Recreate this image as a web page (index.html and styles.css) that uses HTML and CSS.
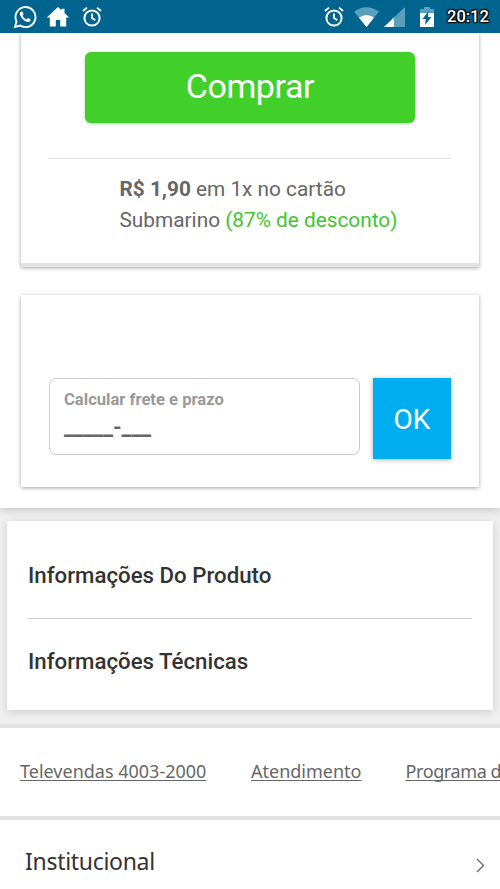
FILE: index.html
```html
<!DOCTYPE html>
<html lang="pt-BR">
<head>
<meta charset="utf-8">
<title>Submarino</title>
<link rel="stylesheet" href="styles.css">
</head>
<body>
<header class="status">
  <svg class="whatsapp" width="24" height="24" viewBox="0 0 24 24"><path d="M2 22l1.500-5.600A10 10 0 1 1 7.300 20.600z" fill="none" stroke="#fff" stroke-width="1.900"/><path d="M8.200 6.500c-2 .8-1.900 3 0 5.700 2.200 3 4.600 4.700 6.900 4.800 1.600 0 2.800-1.100 2.500-2.500l-2.600-1.400c-.8.300-1 1.500-1.700 1.300-1.700-.8-2.800-2-3.700-3.600 0-.7 1.100-1.100.9-1.900L9.600 6.700z" fill="#fff"/></svg>
  <svg class="home" width="24" height="24" viewBox="0 0 24 24"><path d="M12 2L.8 12.600h3V21.500h6v-6.500h4.400v6.500h6v-8.900h3L18.500 8.100V3.800h-3v1.500z" fill="#fff"/></svg>
  <svg class="alarm" width="20" height="22" viewBox="0 0 20 22"><g fill="none" stroke="#fff" stroke-width="2"><circle cx="10" cy="12" r="7.600"/><path d="M1 5l4-3.400M19 5l-4-3.400M10 7.500V12l3.300 2.300" stroke-width="1.800"/></g></svg>
  <span class="fill"></span>
  <svg class="alarm" width="20" height="22" viewBox="0 0 20 22"><g fill="none" stroke="#fff" stroke-width="2"><circle cx="10" cy="12" r="7.600"/><path d="M1 5l4-3.400M19 5l-4-3.400M10 7.500V12l3.300 2.300" stroke-width="1.800"/></g></svg>
  <svg class="wifi" width="25" height="20" viewBox="0 0 25 20"><path d="M12.500 20L0 4.500Q12.500-4 25 4.500z" fill="#5b9fbc"/><path d="M12.500 20L5 10.700Q12.500 5.500 20 10.700z" fill="#fff"/></svg>
  <svg class="signal" width="21" height="20" viewBox="0 0 21 20"><path d="M21 0v20H0z" fill="#5b9fbc"/><path d="M10 10.500V20H0z" fill="#fff"/></svg>
  <svg class="battery" width="14" height="20" viewBox="0 0 14 20"><path d="M0 2h4V0h6v2h4v5H0z" fill="#5b9fbc"/><path d="M0 6h14v14H0z" fill="#fff"/><path d="M8.500 4L2.500 12h3.300L5 18l6.500-8H8z" fill="#00648e"/></svg>
  <time class="clock">20:12</time>
</header>
<main class="product">
  <section class="card buy">
    <button class="buy-btn">Comprar</button>
    <hr class="rule">
    <p class="offer"><b>R$ 1,90</b> em 1x no cartão<br>Submarino <span class="off">(87% de desconto)</span></p>
  </section>
  <section class="card freight">
    <label class="zip"><span class="zip-label">Calcular frete e prazo</span><span class="zip-mask">_____-___</span></label>
    <button class="ok-btn">OK</button>
  </section>
</main>
<section class="info">
  <h2 class="info-row">Informações Do Produto</h2>
  <h2 class="info-row">Informações Técnicas</h2>
</section>
<nav class="links">
  <a class="l1">Televendas 4003-2000</a><a class="l2">Atendimento</a><a class="l3">Programa de</a>
</nav>
<footer class="inst">
  <span class="inst-name">Institucional</span>
  <svg class="chev" width="9" height="15" viewBox="0 0 9 15"><path d="M1 1l6.500 6.500L1 14" fill="none" stroke="#666" stroke-width="1.300"/></svg>
</footer>
</body>
</html>
```
FILE: styles.css
```css
* { box-sizing: border-box; }
body { margin: 0; width: 500px; height: 889px; overflow: hidden; background: #efefef; font-family: Roboto, "Liberation Sans", sans-serif; color: #666; display: flex; flex-direction: column; }
button { border: 0; padding: 0; font-family: inherit; color: #fff; }
.status { height: 33px; flex: none; background: #00648e; display: flex; align-items: center; padding: 0 10px 0 13px; position: relative; z-index: 2; }
.status svg { flex: none; }
.home { margin-left: 9px; }
.status .home + .alarm { margin-left: 12px; }
.fill { flex: 1; }
.wifi { margin-left: 10px; }
.signal { margin-left: 5px; }
.battery { margin-left: 15px; }
.clock { margin-left: 13px; width: 43px; font-size: 16.500px; line-height: 35px; color: #fff; font-weight: 500; white-space: nowrap; text-shadow: 1px 1px 1px #000, -1px -1px 1px #000, 1px -1px 1px #000, -1px 1px 1px #000; }
.product { height: 475px; flex: none; background: #fff; padding: 0 21px; box-shadow: 0 2px 8px rgba(0,0,0,.18); }
.card { background: #fff; box-shadow: 0 1px 4px rgba(0,0,0,.36); }
.buy { height: 234px; padding: 19px 28px 0; border-bottom: 4px solid #e3e3e3; }
.buy-btn { display: block; width: 330px; height: 71px; margin: 0 auto; padding-bottom: 3px; border-radius: 6px; background: #41cf2a; font-size: 34px; letter-spacing: -.4px; box-shadow: 0 1px 3px rgba(0,0,0,.25); }
.rule { border: 0; height: 1px; margin: 35px 0 0; background: #ddd; }
.offer { margin: 15px 0 0 70.500px; font-size: 20.800px; line-height: 31px; white-space: nowrap; }
.off { color: #40c62c; }
.freight { height: 192px; margin-top: 28px; padding: 83px 28px 0; display: flex; justify-content: space-between; align-items: flex-start; }
.zip { width: 311px; height: 77px; border: 1.500px solid #ccc; border-radius: 7px; padding: 10px 14px; display: flex; flex-direction: column; font-weight: 700; }
.zip-label { font-size: 16.600px; line-height: 22px; color: #999; }
.zip-mask { font-size: 22px; line-height: 34px; }
.ok-btn { width: 78px; height: 81px; padding-top: 2px; background: #00aeef; font-size: 28px; box-shadow: 0 1px 5px rgba(0,0,0,.3); }
.info { flex: none; height: 189px; margin: 13px 7px 0; padding: 12px 21px 0; background: #fff; box-shadow: 0 2px 8px rgba(0,0,0,.14); }
.info-row { margin: 0; height: 86px; line-height: 84px; font-size: 22.250px; font-weight: 500; color: #333; }
.info-row:first-child { border-bottom: 1px solid #ccc; }
.links { flex: none; height: 92px; margin-top: 14px; padding: 0 20px 3px; border-top: 4px solid #e3e3e3; background: #fff; display: flex; align-items: center; font-family: "Noto Sans", sans-serif; font-size: 18px; white-space: nowrap; overflow: hidden; }
.links a { flex: none; text-decoration: underline; text-decoration-thickness: 1px; text-underline-offset: 2px; text-decoration-skip-ink: none; }
.l1 { width: 231px; }
.l2 { width: 154.500px; }
.l3 { letter-spacing: -.4px; }
.inst { flex: none; height: 73px; padding: 0 15px 0 25px; border-top: 4px solid #e3e3e3; background: #fff; display: flex; justify-content: space-between; font-family: "Noto Sans", sans-serif; }
.inst-name { font-size: 23px; letter-spacing: -.3px; line-height: 83px; color: #333; }
.chev { margin-top: 38px; }
```
